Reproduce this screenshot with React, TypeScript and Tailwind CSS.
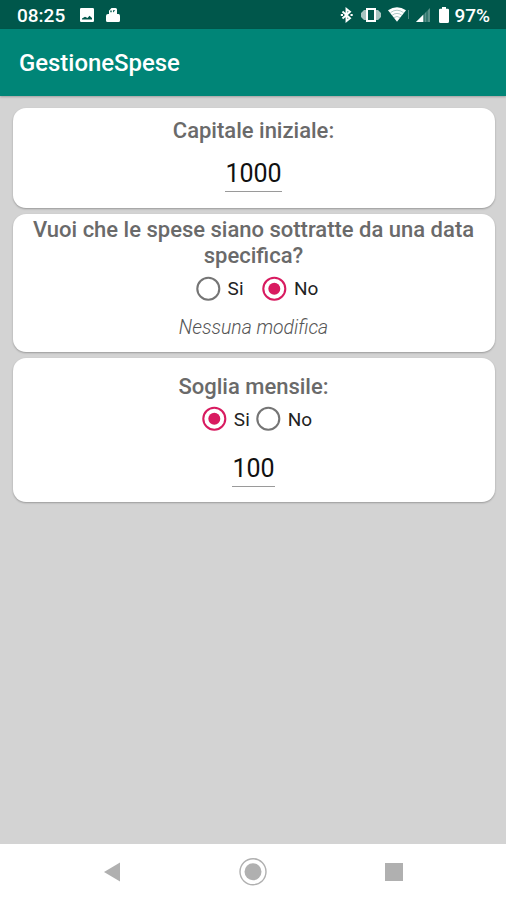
import { useState } from "react";
import type { ReactNode } from "react";

type RadioProps = {
  label: string;
  checked: boolean;
  onSelect: () => void;
};

function Radio({ label, checked, onSelect }: RadioProps) {
  return (
    <button type="button" role="radio" aria-checked={checked} onClick={onSelect} className="flex h-[26px] items-center gap-[7px]">
      <svg width="26" height="26" viewBox="0 0 26 26" fill="none" className={checked ? "text-[#d81b60]" : "text-[#757575]"}>
        <circle cx="13.300" cy="12.800" r="11" stroke="currentColor" strokeWidth="2.1" />
        {checked && <circle cx="13.300" cy="12.800" r="6" fill="currentColor" />}
      </svg>
      <span className="pt-px text-[19px] leading-[26px] text-[#222]">{label}</span>
    </button>
  );
}

function Card({ className, children }: { className: string; children: ReactNode }) {
  return (
    <section className={`flex flex-col items-center rounded-[13px] bg-white shadow-[0_1px_2px_rgba(0,0,0,0.28)] ${className}`}>
      {children}
    </section>
  );
}

function StatusBar() {
  return (
    <div className="flex h-[29px] items-center bg-[#00574b] pl-[17px] pr-4 text-white">
      <span className="pt-px text-[19px] font-medium leading-[29px]">08:25</span>
      <svg width="14" height="14" viewBox="0 0 14 14" className="ml-[15px]">
        <path fill="currentColor" fillRule="evenodd" d="M1.2 0h11.6Q14 0 14 1.2v11.6q0 1.200-1.200 1.200H1.200Q0 14 0 12.800V1.200Q0 0 1.200 0ZM2 11.500h10V10L9.500 7.800 7.500 10 5 8.800 2 10.500Z" />
      </svg>
      <svg width="14" height="14" viewBox="0 0 14 14" className="ml-3">
        <path fill="currentColor" fillRule="evenodd" d="M3 6V2.800L5.500 0h4Q11 0 11 1.500V6h1.500Q14 6 14 8v4.500Q14 14 12.500 14h-11Q0 14 0 12.500V8Q0 6 2 6ZM4.300 2.500v1.800h1.400V2.500ZM7 2.200v2.300l2.300-2.300Z" />
      </svg>
      <div className="ml-auto flex items-center">
        <svg width="13" height="16" viewBox="0 0 13 16" fill="none" stroke="currentColor" strokeWidth="1.9">
          <path d="M2.500 4.500 10 11.200 6.500 14V2L10 4.800 2.500 11.500" />
          <path d="M.8 8h2.200M10.500 8h2.200" />
        </svg>
        <svg width="20" height="14" viewBox="0 0 20 14" className="ml-2">
          <path d="M3 2h3v10H3L0 9V5ZM14 2h3l3 3v4l-3 3h-3Z" fill="currentColor" fillOpacity=".65" />
          <rect x="6" y="1" width="8" height="12" fill="#00574b" stroke="currentColor" strokeWidth="2" />
        </svg>
        <svg width="22" height="15" viewBox="0 0 22 15" className="ml-[7px]" fill="none">
          <path d="M0 3.300Q9 -3 18 3.300L9 14.800Z" fill="currentColor" />
          <path d="M2.500 5.600Q9 .8 15.500 5.600M4.200 8.200Q9 4.600 13.800 8.200M6 10.600Q9 8.300 12 10.600" stroke="#00574b" strokeOpacity=".45" strokeWidth=".7" />
          <path d="M20.500 3v9" stroke="currentColor" strokeOpacity=".3" />
        </svg>
        <svg width="14" height="14" viewBox="0 0 14 14" className="ml-[6px]">
          <path d="M14 0v14H0Z" fill="currentColor" fillOpacity=".35" />
          <path d="M7.500 6.500V14H0Z" fill="currentColor" />
          <path d="M8 4v10M11 2v12" stroke="#00574b" strokeWidth=".8" />
        </svg>
        <svg width="10" height="16" viewBox="0 0 10 16" className="ml-[9px]">
          <path fill="currentColor" d="M3 0h4v1.800h1.800Q10 1.800 10 3v11.500Q10 16 8.500 16h-7Q0 16 0 14.500V3Q0 1.800 1.200 1.800H3Z" />
        </svg>
        <span className="ml-[5px] pt-px text-[19px] font-medium leading-[29px]">97%</span>
      </div>
    </div>
  );
}

function NavBar() {
  return (
    <nav className="flex h-[56px] items-center bg-white text-[#b0b0b0]">
      <button type="button" aria-label="Indietro" className="ml-[104px]">
        <svg width="16" height="20" viewBox="0 0 16 20">
          <path d="M0 10 16 .5v19Z" fill="currentColor" />
        </svg>
      </button>
      <button type="button" aria-label="Home" className="ml-[119px]">
        <svg width="28" height="28" viewBox="0 0 28 28">
          <circle cx="14" cy="13.700" r="13" fill="none" stroke="currentColor" strokeWidth="1.400" />
          <circle cx="14" cy="13.700" r="8.500" fill="currentColor" />
        </svg>
      </button>
      <button type="button" aria-label="Recenti" className="ml-[118px]">
        <svg width="18" height="18" viewBox="0 0 18 18">
          <rect width="18" height="18" fill="currentColor" />
        </svg>
      </button>
    </nav>
  );
}

export default function App() {
  const [capitale, setCapitale] = useState("1000");
  const [daData, setDaData] = useState(false);
  const [soglia, setSoglia] = useState(true);
  const [importo, setImporto] = useState("100");

  return (
    <div className="flex h-[900px] w-[506px] flex-col overflow-hidden bg-[#d3d3d3] font-[Roboto,sans-serif]">
      <StatusBar />
      <header className="z-10 flex h-[67px] shrink-0 items-center bg-[#008577] pl-[19px] pt-[3px] shadow-[0_1px_2px_rgba(0,0,0,0.25)]">
        <h1 className="text-[23.900px] font-medium text-white">GestioneSpese</h1>
      </header>

      <main className="flex flex-1 flex-col gap-[6px] pl-[12.500px] pr-[11.500px] pt-[12px]">
        <Card className="h-[99.500px]">
          <h2 className="mt-[10px] text-[22px] font-medium leading-[26px] text-[#6a6a6a]">Capitale iniziale:</h2>
          <input
            value={capitale}
            onChange={(e) => setCapitale(e.target.value)}
            className="mt-[12px] h-[36px] w-[57px] border-b border-[#9a9a9a] text-center text-[25px] text-[#111] outline-none"
          />
        </Card>

        <Card className="h-[138.500px]">
          <h2 className="mt-[3px] text-center text-[22px] font-medium leading-[26px] text-[#6a6a6a]">
            Vuoi che le spese siano sottratte da una data specifica?
          </h2>
          <div role="radiogroup" className="mt-[7px] flex gap-[17.500px] pl-[6px]">
            <Radio label="Si" checked={daData} onSelect={() => setDaData(true)} />
            <Radio label="No" checked={!daData} onSelect={() => setDaData(false)} />
          </div>
          <p className="mt-[14px] text-[19.400px] font-light italic leading-[24px] text-[#555]">Nessuna modifica</p>
        </Card>

        <Card className="h-[144px]">
          <h2 className="mt-[16px] text-[22px] font-medium leading-[26px] text-[#6a6a6a]">Soglia mensile:</h2>
          <div role="radiogroup" className="mt-[6px] flex gap-[5px] pl-[6px]">
            <Radio label="Si" checked={soglia} onSelect={() => setSoglia(true)} />
            <Radio label="No" checked={!soglia} onSelect={() => setSoglia(false)} />
          </div>
          <input
            value={importo}
            onChange={(e) => setImporto(e.target.value)}
            className="mt-[19px] h-[36px] w-[43px] border-b border-[#9a9a9a] text-center text-[25px] text-[#111] outline-none"
          />
        </Card>
      </main>

      <NavBar />
    </div>
  );
}
